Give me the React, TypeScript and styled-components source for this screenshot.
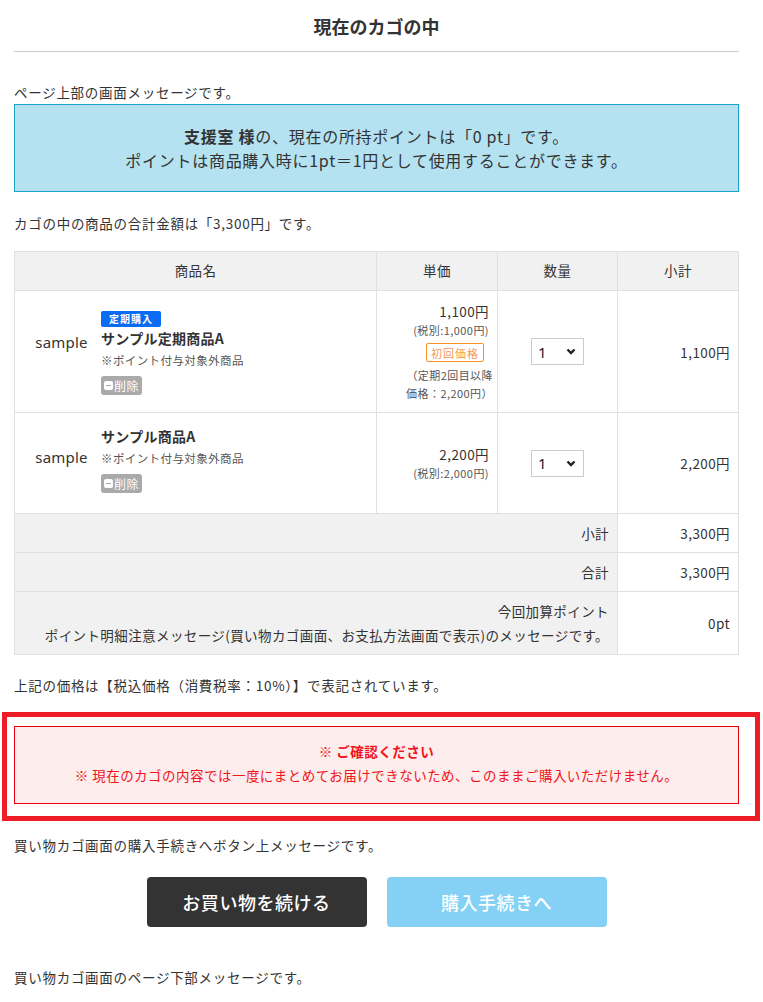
import React from "react";
import styled, { createGlobalStyle } from "styled-components";

const GlobalStyle = createGlobalStyle`
    body {
        margin: 0;
        background: #ffffff;
        color: #333333;
        font-family: "Noto Sans CJK JP", "Noto Sans", sans-serif;
        letter-spacing: 0.045em;
    }
`

const Page = styled.main`
    padding: 0 24px 20px 14px;
`
const Title = styled.h1`
    margin: 0;
    padding: 13px 0 12px;
    font-size: 18px;
    line-height: 26px;
    font-weight: 700;
    letter-spacing: 0;
    text-align: center;
    border-bottom: 1px solid #cccccc;
`
const Message = styled.p<{ $top: number }>`
    margin: ${(p) => p.$top}px 0 0;
    font-size: 13.5px;
    line-height: 20px;
`
const PointBox = styled.div`
    margin-top: 2px;
    padding: 19px 10px;
    background-color: #b5e2f0;
    border: 1px solid #19a3c9;
    text-align: center;
    font-size: 16px;
    line-height: 24px;
    b {
        font-weight: 700;
    }
`
const CartTable = styled.table`
    margin-top: 18px;
    width: 100%;
    border-collapse: collapse;
    table-layout: fixed;
    font-size: 13.5px;
    letter-spacing: 0.03em;
`
const Th = styled.th`
    background-color: #f1f1f1;
    border: 1px solid #e0e0e0;
    padding: 9px 8px 10px;
    font-weight: 400;
    line-height: 19px;
`
const Td = styled.td<{ $align?: string; $bg?: string }>`
    border: 1px solid #e0e0e0;
    padding: 10px 8px;
    text-align: ${(p) => p.$align || "left"};
    background-color: ${(p) => p.$bg || "#ffffff"};
    vertical-align: middle;
    line-height: 20px;
`
const SumCell = styled(Td)`
    padding: 7px 8px;
    line-height: 24px;
`
const Item = styled.div`
    display: flex;
    align-items: flex-start;
    box-sizing: border-box;
    min-height: 80px;
    padding-top: 3px;
    margin-left: -1px;
`
const Thumb = styled.div`
    display: flex;
    align-items: center;
    justify-content: center;
    width: 79px;
    height: 62px;
    flex-shrink: 0;
    font-family: "Noto Sans", sans-serif;
    font-size: 15px;
    letter-spacing: 0.2px;
`
const Info = styled.div`
    display: flex;
    flex-direction: column;
    align-items: flex-start;
`
const RegularBadge = styled.span`
    display: inline-flex;
    align-items: center;
    justify-content: center;
    width: 60px;
    height: 16px;
    margin-bottom: 1px;
    border-radius: 2px;
    background-color: #0a6cf2;
    color: #ffffff;
    font-size: 10px;
    font-weight: 700;
    letter-spacing: 1px;
`
const ItemName = styled.div`
    font-size: 14px;
    font-weight: 700;
    line-height: 20px;
    letter-spacing: 0.02em;
`
const ItemNote = styled.div`
    margin-top: 3px;
    font-size: 11.5px;
    line-height: 18px;
    color: #555555;
`
const DeleteButton = styled.button`
    display: inline-flex;
    align-items: center;
    gap: 1px;
    margin-top: 7px;
    height: 19px;
    padding: 0 3px;
    border: none;
    border-radius: 3px;
    background-color: #aaaaaa;
    color: #ffffff;
    font-family: inherit;
    font-size: 12px;
    letter-spacing: 0.05em;
    line-height: 19px;
`
const MinusBox = styled.span`
    display: inline-flex;
    align-items: center;
    justify-content: center;
    width: 9px;
    height: 9px;
    border-radius: 2px;
    background-color: #ffffff;
    &::after {
        content: "";
        width: 5px;
        height: 1.5px;
        background-color: #aaaaaa;
    }
`
const Price = styled.div`
    font-size: 13.5px;
    line-height: 20px;
`
const SmallNote = styled.div`
    font-size: 11px;
    line-height: 18px;
    color: #555555;
    letter-spacing: 0.04em;
`
const FirstBadge = styled.span`
    display: inline-flex;
    align-items: center;
    justify-content: center;
    width: 56px;
    height: 17px;
    margin: 4px 5px 0 0;
    border: 1px solid #f7931e;
    border-radius: 2px;
    color: #f59a52;
    font-size: 11px;
    letter-spacing: 1px;
`
const LaterNote = styled(SmallNote)`
    margin: 4px -4px 0 0;
    text-align: right;
`
const QtyWrap = styled.div`
    position: relative;
    width: 53px;
    height: 27px;
    margin: 0 auto;
`
const QtySelect = styled.select`
    width: 100%;
    height: 100%;
    appearance: none;
    border: 1px solid #cccccc;
    border-radius: 0;
    background: #ffffff;
    padding: 0 0 0 6px;
    font-family: "Noto Sans", sans-serif;
    font-size: 15px;
    color: #222222;
`
const Chevron = styled.svg`
    position: absolute;
    right: 8px;
    top: 10px;
    pointer-events: none;
`
const Notice = styled.p`
    margin: 20px 0 0;
    font-size: 13.5px;
    line-height: 20px;
`
const Highlight = styled.div`
    margin: 17px -21px 0 -12px;
    padding: 9px 16px 12px 7px;
    border: 5px solid #ee1c25;
`
const AlertBox = styled.div`
    padding: 12px 10px 16px;
    border: 1px solid #e60012;
    background-color: #fdeded;
    color: #f0141c;
    text-align: center;
    font-size: 13.5px;
    line-height: 24px;
    letter-spacing: 0.035em;
    strong {
        font-weight: 700;
    }
`
const Buttons = styled.div`
    display: flex;
    justify-content: center;
    gap: 20px;
    margin-top: 22px;
`
const Button = styled.button<{ $bg: string }>`
    width: 220px;
    height: 50px;
    border: none;
    border-radius: 4px;
    background-color: ${(p) => p.$bg};
    color: #ffffff;
    font-family: inherit;
    font-size: 18px;
    font-weight: 500;
    letter-spacing: 0.03em;
`

interface CartItem {
    name: string;
    regular?: boolean;
    price: string;
    taxExcluded: string;
    subtotal: string;
}

const items: CartItem[] = [
    { name: "サンプル定期商品A", regular: true, price: "1,100円", taxExcluded: "(税別:1,000円)", subtotal: "1,100円" },
    { name: "サンプル商品A", price: "2,200円", taxExcluded: "(税別:2,000円)", subtotal: "2,200円" },
]

const ChevronIcon = () => (
    <Chevron width="10" height="7" viewBox="0 0 10 7">
        <path d="M1.5 1.5 L5 5 L8.5 1.5" fill="none" stroke="#222" strokeWidth="2.4" />
    </Chevron>
)

const App: React.FC = () => {
    return (
        <Page>
            <GlobalStyle />
            <Title>現在のカゴの中</Title>
            <Message $top={30}>ページ上部の画面メッセージです。</Message>
            <PointBox>
                <b>支援室 様</b>の、現在の所持ポイントは「0 pt」です。<br />
                ポイントは商品購入時に1pt＝1円として使用することができます。
            </PointBox>
            <Message $top={21}>カゴの中の商品の合計金額は「3,300円」です。</Message>
            <CartTable>
                <colgroup>
                    <col style={{ width: 362 }} />
                    <col style={{ width: 121 }} />
                    <col style={{ width: 120 }} />
                    <col />
                </colgroup>
                <thead>
                    <tr>
                        <Th>商品名</Th>
                        <Th>単価</Th>
                        <Th>数量</Th>
                        <Th>小計</Th>
                    </tr>
                </thead>
                <tbody>
                    {items.map((item) => (
                        <tr key={item.name}>
                            <Td>
                                <Item>
                                    <Thumb>sample</Thumb>
                                    <Info>
                                        {item.regular && <RegularBadge>定期購入</RegularBadge>}
                                        <ItemName>{item.name}</ItemName>
                                        <ItemNote>※ポイント付与対象外商品</ItemNote>
                                        <DeleteButton>
                                            <MinusBox />
                                            削除
                                        </DeleteButton>
                                    </Info>
                                </Item>
                            </Td>
                            <Td $align="right">
                                <Price>{item.price}</Price>
                                <SmallNote>{item.taxExcluded}</SmallNote>
                                {item.regular && (
                                    <>
                                        <FirstBadge>初回価格</FirstBadge>
                                        <LaterNote>（定期2回目以降<br />価格：2,200円）</LaterNote>
                                    </>
                                )}
                            </Td>
                            <Td $align="center">
                                <QtyWrap>
                                    <QtySelect defaultValue="1">
                                        <option value="1">1</option>
                                        <option value="2">2</option>
                                        <option value="3">3</option>
                                    </QtySelect>
                                    <ChevronIcon />
                                </QtyWrap>
                            </Td>
                            <Td $align="right">{item.subtotal}</Td>
                        </tr>
                    ))}
                    <tr>
                        <SumCell colSpan={3} $align="right" $bg="#f1f1f1">小計</SumCell>
                        <SumCell $align="right">3,300円</SumCell>
                    </tr>
                    <tr>
                        <SumCell colSpan={3} $align="right" $bg="#f1f1f1">合計</SumCell>
                        <SumCell $align="right">3,300円</SumCell>
                    </tr>
                    <tr>
                        <SumCell colSpan={3} $align="right" $bg="#f1f1f1">
                            今回加算ポイント<br />
                            ポイント明細注意メッセージ(買い物カゴ画面、お支払方法画面で表示)のメッセージです。
                        </SumCell>
                        <SumCell $align="right">0pt</SumCell>
                    </tr>
                </tbody>
            </CartTable>
            <Notice>上記の価格は【税込価格（消費税率：10%）】で表記されています。</Notice>
            <Highlight>
                <AlertBox>
                    <strong>※ ご確認ください</strong><br />
                    ※ 現在のカゴの内容では一度にまとめてお届けできないため、このままご購入いただけません。
                </AlertBox>
            </Highlight>
            <Message $top={14}>買い物カゴ画面の購入手続きへボタン上メッセージです。</Message>
            <Buttons>
                <Button $bg="#333333">お買い物を続ける</Button>
                <Button $bg="#84d1f5">購入手続きへ</Button>
            </Buttons>
            <Message $top={40}>買い物カゴ画面のページ下部メッセージです。</Message>
        </Page>
    )
}

export default App
